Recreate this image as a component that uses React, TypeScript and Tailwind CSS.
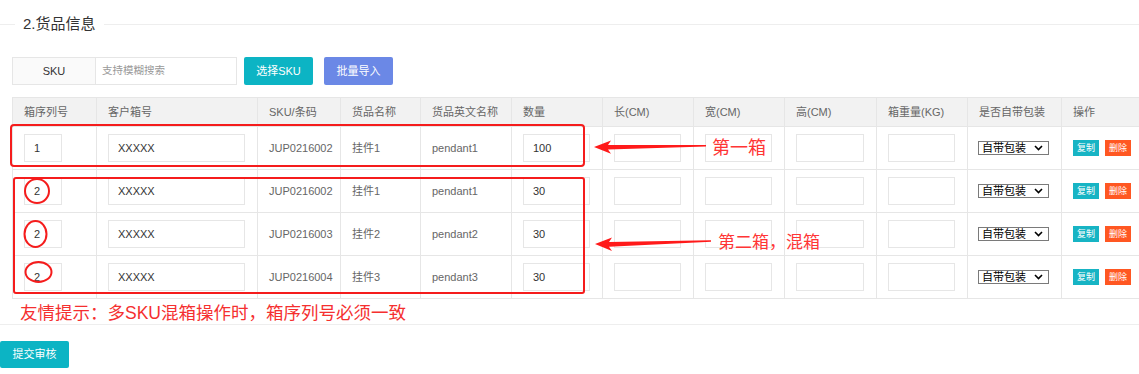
import React from "react";

const font = "font-['Liberation_Sans','Noto_Sans_CJK_SC',sans-serif]";
const cell = "border border-[#e6e6e6] px-[11px] text-left align-middle";
const field =
  "h-[28px] border border-[#e6e6e6] bg-white px-[9px] text-[11px] text-[#333] outline-none";

const columns = [
  { label: "箱序列号", w: "w-[84px]" },
  { label: "客户箱号", w: "w-[161px]" },
  { label: "SKU/条码", w: "w-[83px]" },
  { label: "货品名称", w: "w-[80px]" },
  { label: "货品英文名称", w: "w-[91px]" },
  { label: "数量", w: "w-[91px]" },
  { label: "长(CM)", w: "w-[91px]" },
  { label: "宽(CM)", w: "w-[91px]" },
  { label: "高(CM)", w: "w-[92px]" },
  { label: "箱重量(KG)", w: "w-[91px]" },
  { label: "是否自带包装", w: "w-[94px]" },
  { label: "操作", w: "w-[90px]" },
];

const rows = [
  { seq: "1", box: "XXXXX", sku: "JUP0216002", name: "挂件1", en: "pendant1", qty: "100" },
  { seq: "2", box: "XXXXX", sku: "JUP0216002", name: "挂件1", en: "pendant1", qty: "30" },
  { seq: "2", box: "XXXXX", sku: "JUP0216003", name: "挂件2", en: "pendant2", qty: "30" },
  { seq: "2", box: "XXXXX", sku: "JUP0216004", name: "挂件3", en: "pendant3", qty: "30" },
];

function PackSelect() {
  return (
    <div className="relative w-[71px]">
      <select
        defaultValue="own"
        className="block h-[14px] w-[71px] appearance-none border border-[#7a7a7a] bg-white pl-[3px] text-[11px] leading-[12px] text-black outline-none"
      >
        <option value="own">自带包装</option>
        <option value="none">无包装</option>
      </select>
      <svg
        width="9"
        height="6"
        viewBox="0 0 9 6"
        className="pointer-events-none absolute right-[6px] top-[4px]"
      >
        <path d="M1 1l3.5 3.5L8 1" fill="none" stroke="#000" strokeWidth="1.6" />
      </svg>
    </div>
  );
}

export default function App() {
  return (
    <div className={`relative h-[374px] w-[1139px] overflow-hidden bg-white ${font}`}>
      {/* section legend */}
      <div className="flex items-center pt-[14px]">
        <div className="w-[15px] border-t border-[#eeeeee]" />
        <span className="px-[8px] text-[15px] leading-[20px] text-[#333]">2.货品信息</span>
        <div className="flex-1 border-t border-[#eeeeee]" />
      </div>

      {/* sku search */}
      <div className="ml-[12px] mt-[23px] flex h-[28px] items-center">
        <div className="flex h-[28px] w-[225px] border border-[#e6e6e6]">
          <div className="flex w-[83px] items-center justify-center border-r border-[#e6e6e6] bg-[#fafafa] text-[11px] text-[#333]">
            SKU
          </div>
          <input
            placeholder="支持模糊搜索"
            className="min-w-0 flex-1 px-[6px] text-[10.5px] text-[#333] outline-none placeholder:text-[#999]"
          />
        </div>
        <button className="ml-[7px] h-[28px] w-[69px] rounded-[2px] bg-[#0cb4c4] text-[11px] text-white">
          选择SKU
        </button>
        <button className="ml-[11px] h-[28px] w-[69px] rounded-[2px] bg-[#6b88e6] text-[11px] text-white">
          批量导入
        </button>
      </div>

      {/* goods table */}
      <table className="ml-[12px] mt-[12px] w-[1139px] table-fixed border-collapse text-[11px]">
        <colgroup>
          {columns.map((c) => (
            <col key={c.label} className={c.w} />
          ))}
        </colgroup>
        <thead>
          <tr className="h-[29px] bg-[#f2f2f2]">
            {columns.map((c) => (
              <th key={c.label} className={`${cell} whitespace-nowrap font-normal text-[#666]`}>
                {c.label}
              </th>
            ))}
          </tr>
        </thead>
        <tbody>
          {rows.map((r, i) => (
            <tr key={i} className="h-[43px]">
              <td className={cell}>
                <input defaultValue={r.seq} className={`${field} w-[38px]`} />
              </td>
              <td className={`${cell} pr-[12px]`}>
                <input defaultValue={r.box} className={`${field} w-full`} />
              </td>
              <td className={`${cell} text-[#666]`}>{r.sku}</td>
              <td className={`${cell} text-[#666]`}>{r.name}</td>
              <td className={`${cell} text-[#666]`}>{r.en}</td>
              <td className={`${cell} pr-[12px]`}>
                <input defaultValue={r.qty} className={`${field} w-full`} />
              </td>
              {[0, 1, 2, 3].map((k) => (
                <td key={k} className={`${cell} pr-[12px]`}>
                  <input className={`${field} w-full`} />
                </td>
              ))}
              <td className={`${cell} pl-[10px]`}>
                <PackSelect />
              </td>
              <td className={cell}>
                <div className="flex gap-[6px]">
                  <button className="h-[16px] w-[26px] bg-[#17b4c4] text-[9px] leading-[16px] text-white">
                    复制
                  </button>
                  <button className="h-[16px] w-[26px] bg-[#ff5722] text-[9px] leading-[16px] text-white">
                    删除
                  </button>
                </div>
              </td>
            </tr>
          ))}
        </tbody>
      </table>

      <p className="ml-[20px] mt-[4px] text-[17.5px] leading-[20px] text-[#f52f2f]">
        友情提示：多SKU混箱操作时，箱序列号必须一致
      </p>
      <div className="mt-[1px] border-t border-[#eeeeee]" />
      <button className="mt-[16px] h-[27px] w-[69px] rounded-[2px] bg-[#0cb4c4] text-[11px] text-white">
        提交审核
      </button>

      {/* annotations drawn over the page */}
      <svg
        width="1139"
        height="374"
        viewBox="0 0 1139 374"
        className="pointer-events-none absolute left-0 top-0"
      >
        <g fill="none" stroke="#f51c1c" strokeWidth="2">
          <rect x="11" y="125" width="573" height="41" rx="3" />
          <rect x="14" y="178" width="570" height="115" rx="2" />
          <ellipse cx="37" cy="191" rx="12" ry="12" />
          <ellipse cx="35.5" cy="234" rx="11" ry="13" />
          <ellipse cx="38.5" cy="272" rx="13" ry="10" />
        </g>
        <g fill="#ff1a1a">
          <polygon points="594,147 611,140.5 608,145 706,145 706,146.6 608,149.6 611,153.8" />
          <polygon points="595,244 612,237.5 609,242 711,240.2 711,241.8 609,246.8 612,251" />
        </g>
      </svg>
      <span className="absolute left-[712px] top-[137px] text-[18px] leading-[22px] text-[#ff3535]">
        第一箱
      </span>
      <span className="absolute left-[718px] top-[232px] text-[17px] leading-[22px] text-[#ff3535]">
        第二箱，混箱
      </span>
    </div>
  );
}
